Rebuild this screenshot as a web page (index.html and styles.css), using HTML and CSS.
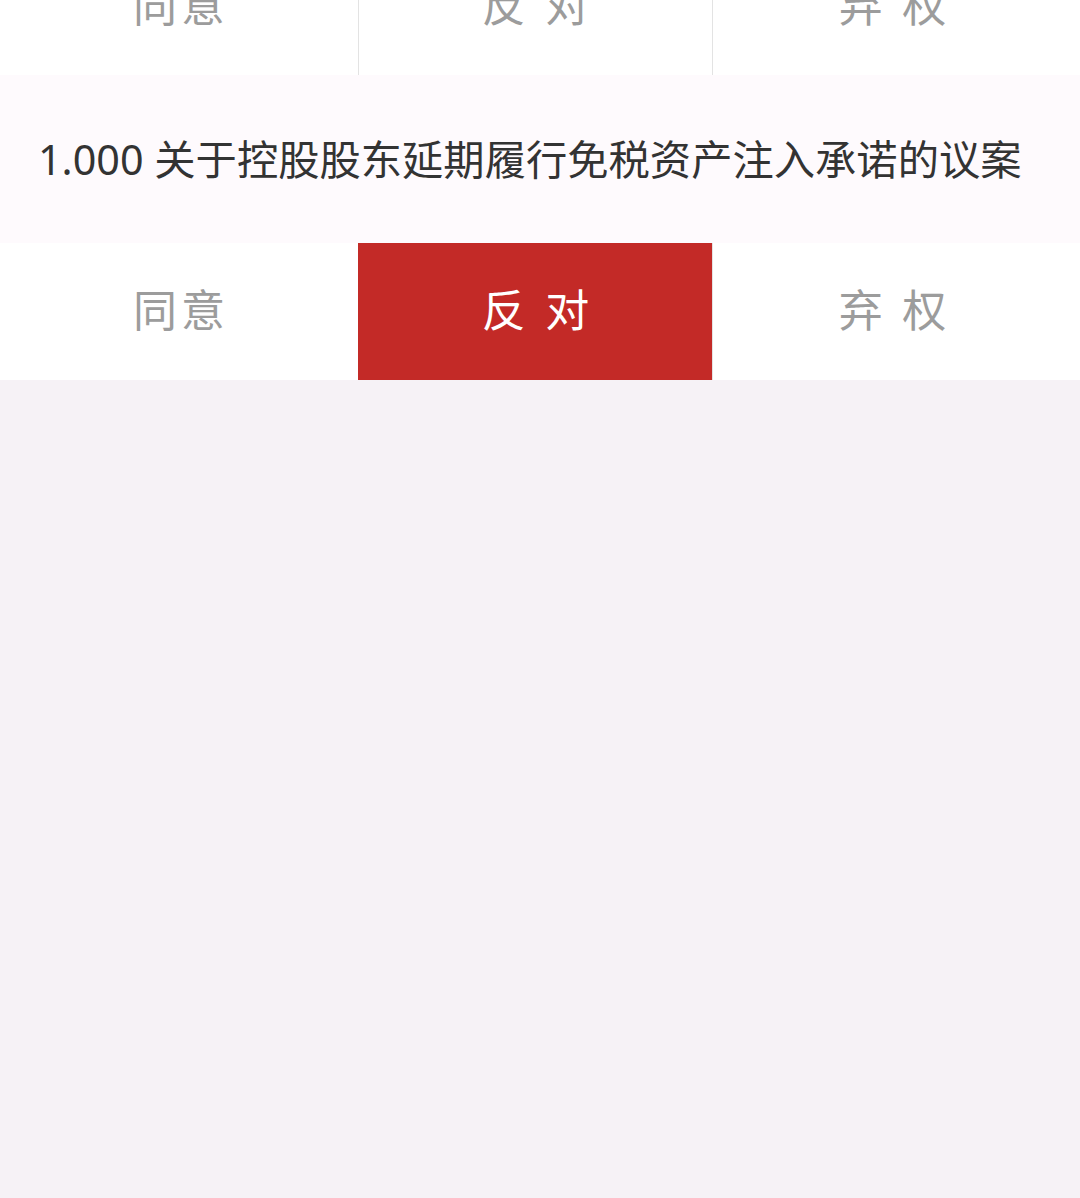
FILE: index.html
```html
<!DOCTYPE html>
<html lang="zh-CN">
<head>
  <meta charset="UTF-8">
  <meta name="viewport" content="width=device-width, initial-scale=1.0">
  <title>投票</title>
  <link rel="stylesheet" href="styles.css">
</head>
<body>
  <div class="vote-list">
    <div class="vote-row first">
      <div class="opt">同意</div>
      <div class="opt">反 对</div>
      <div class="opt">弃 权</div>
    </div>

    <div class="motion">1.000 关于控股股东延期履行免税资产注入承诺的议案</div>
    <div class="vote-row">
      <div class="opt">同意</div>
      <div class="opt active">反 对</div>
      <div class="opt">弃 权</div>
    </div>
  </div>
</body>
</html>
```

FILE: styles.css
```css
html, body {
  margin: 0;
  padding: 0;
  background-color: #f6f2f6;
  font-family: "Noto Sans", "Noto Sans CJK SC", sans-serif;
}
body {
  overflow: hidden;
}
.vote-list {
  width: 1080px;
}
.vote-row {
  display: grid;
  grid-template-columns: 358px 354px 1fr;
  height: 137px;
  background: white;
}
.vote-row.first {
  margin-top: -62px;
}
.opt {
  display: flex;
  align-items: center;
  justify-content: center;
  padding: 0 0 8px 4px;
  font-size: 44px;
  letter-spacing: 4px;
  color: #9c9c9c;
  white-space: pre;
}
.opt:last-child {
  padding-right: 8px;
}
.opt + .opt {
  border-left: 1px solid #e3e3e3;
}
.opt.active {
  background-color: #c32a27;
  color: white;
  border-left-color: #c32a27;
}
.motion {
  height: 168px;
  display: flex;
  align-items: center;
  padding: 0 0 4px 38px;
  box-sizing: border-box;
  background-color: #fefafd;
  font-size: 41.3px;
  color: #333;
}
```
